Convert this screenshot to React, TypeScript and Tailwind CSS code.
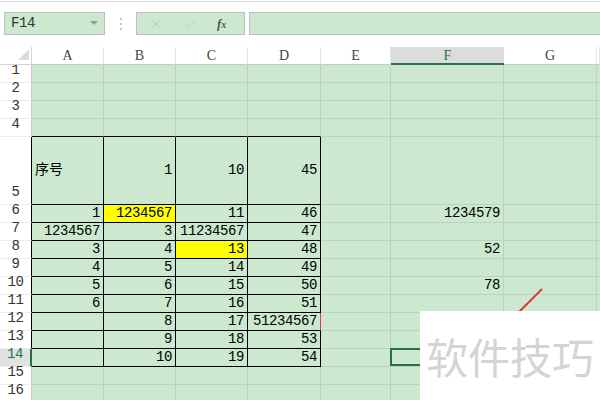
import { X, Check } from "lucide-react";

const COLS = ["", "A", "B", "C", "D", "E", "F", "G", ""];
const WIDTHS = ["w-[32px]", "w-[72px]", "w-[72px]", "w-[72px]", "w-[73px]", "w-[70px]", "w-[113px]", "w-[93px]", "w-[3px]"];

// cell values keyed by "row-col"
const DATA: Record<string, string> = {
  "5-1": "序号", "5-2": "1", "5-3": "10", "5-4": "45",
  "6-1": "1", "6-2": "1234567", "6-3": "11", "6-4": "46", "6-6": "1234579",
  "7-1": "1234567", "7-2": "3", "7-3": "11234567", "7-4": "47",
  "8-1": "3", "8-2": "4", "8-3": "13", "8-4": "48", "8-6": "52",
  "9-1": "4", "9-2": "5", "9-3": "14", "9-4": "49",
  "10-1": "5", "10-2": "6", "10-3": "15", "10-4": "50", "10-6": "78",
  "11-1": "6", "11-2": "7", "11-3": "16", "11-4": "51",
  "12-2": "8", "12-3": "17", "12-4": "51234567",
  "13-2": "9", "13-3": "18", "13-4": "53",
  "14-2": "10", "14-3": "19", "14-4": "54",
};

const YELLOW = ["6-2", "8-3"];

const inTable = (r: number, c: number) => r >= 5 && r <= 14 && c >= 1 && c <= 4;

const mono = { fontFamily: '"Liberation Mono", "Noto Sans CJK SC", monospace' };

const Toolbar = () => (
  <div className="h-[46px] bg-white border-t border-[#d9d9d9] mt-[1px] flex items-start pt-[10px]">
    <div className="ml-[4px] w-[101px] h-[23px] bg-[#cce8cf] border border-[#bdbdbd] flex items-center justify-between pl-[6px] pr-[6px]">
      <span className="text-[14px] tracking-[-0.4px] text-[#333]" style={mono}>F14</span>
      <svg width="8" height="5" viewBox="0 0 8 5">
        <polygon points="0,0 8,0 4,4" fill="#9a9a9a" />
      </svg>
    </div>
    <div className="w-[31px] h-[23px] flex flex-col items-center justify-center gap-[3px]">
      <div className="w-[2px] h-[2px] bg-[#c4c4c4]" />
      <div className="w-[2px] h-[2px] bg-[#c4c4c4]" />
      <div className="w-[2px] h-[2px] bg-[#c4c4c4]" />
    </div>
    <div className="w-[109px] h-[23px] bg-[#cce8cf] border border-[#bdbdbd] flex items-center">
      <X size={14} strokeWidth={1.5} className="ml-[12px] text-[#b8c8ba]" />
      <Check size={14} strokeWidth={1.5} className="ml-[20px] text-[#b8c8ba]" />
      <span
        className="ml-[20px] text-[13px] italic font-bold text-[#555]"
        style={{ fontFamily: '"Liberation Serif", serif' }}
      >
        f<span className="text-[10px]">x</span>
      </span>
    </div>
    <div className="ml-[4px] flex-1 h-[23px] bg-[#cce8cf] border border-[#bdbdbd] border-r-0" />
  </div>
);

const HeaderRow = () => (
  <div className="flex h-[18px]">
    {COLS.map((name, c) => {
      if (c === 0)
        return (
          <div key={c} className={`${WIDTHS[c]} shrink-0 bg-white border-r border-b border-[#d4d4d4] relative`}>
            <svg className="absolute left-[18px] top-[2px]" width="11" height="11" viewBox="0 0 11 11">
              <polygon points="11,0 11,11 0,11" fill="#dcdcdc" />
            </svg>
          </div>
        );
      if (c === 6)
        return (
          <div
            key={c}
            className={`${WIDTHS[c]} shrink-0 bg-[#dcdcdc] border-b-2 border-[#217346] flex items-center justify-center text-[14px] text-[#217346]`}
            style={{ fontFamily: '"Liberation Serif", serif' }}
          >
            {name}
          </div>
        );
      return (
        <div
          key={c}
          className={`${WIDTHS[c]} shrink-0 bg-white border-r border-b border-r-[#e6e6e6] border-b-[#c8c8c8] flex items-center justify-center text-[14px] text-[#444]`}
          style={{ fontFamily: '"Liberation Serif", serif' }}
        >
          {name}
        </div>
      );
    })}
  </div>
);

const RowHeader = ({ r }: { r: number }) => {
  if (r === 14)
    return (
      <div
        className={`${WIDTHS[0]} shrink-0 bg-[#e1e1e1] border-r-2 border-b border-r-[#217346] border-b-[#ececec] flex items-end justify-center pb-[1px] text-[14px] tracking-[-0.4px] text-[#217346]`}
        style={mono}
      >
        {r}
      </div>
    );
  const right = r >= 5 && r <= 13 ? "border-r-black" : "border-r-[#c8c8c8]";
  return (
    <div
      className={`${WIDTHS[0]} shrink-0 bg-white border-r border-b ${right} border-b-[#ececec] flex items-end justify-center pb-[1px] text-[14px] tracking-[-0.4px] text-[#333]`}
      style={mono}
    >
      {r}
    </div>
  );
};

const Cell = ({ r, c }: { r: number; c: number }) => {
  const key = `${r}-${c}`;
  const value = DATA[key];
  const rightBlack = inTable(r, c) || inTable(r, c + 1);
  const bottomBlack = inTable(r, c) || inTable(r + 1, c);
  let right = rightBlack ? "border-r-black" : "border-r-[#bcd2bf]";
  if (key === "12-4") right = "border-r-[#e04040]";
  const bottom = bottomBlack ? "border-b-black" : "border-b-[#bcd2bf]";
  const bg = YELLOW.includes(key) ? "bg-[#ffff00]" : "bg-[#cce8cf]";
  const isText = key === "5-1";
  return (
    <div
      className={`${WIDTHS[c]} shrink-0 relative border-r border-b ${right} ${bottom} ${bg} flex items-center ${
        isText ? "justify-start pl-[3px]" : "justify-end pr-[3px]"
      } ${isText ? "text-[14px]" : "text-[14px] tracking-[-0.4px]"} text-black whitespace-nowrap`}
      style={mono}
    >
      {value}
      {key === "14-6" && (
        <div className="absolute -left-[1px] -top-[1px] right-0 bottom-0 border-2 border-[#217346]" />
      )}
    </div>
  );
};

const Row = ({ r }: { r: number }) => (
  <div className={`flex ${r === 5 ? "h-[68px]" : "h-[18px]"}`}>
    <RowHeader r={r} />
    {COLS.slice(1).map((_, i) => (
      <Cell key={i} r={r} c={i + 1} />
    ))}
  </div>
);

export default function App() {
  return (
    <div className="relative w-[600px] h-[400px] overflow-hidden bg-white">
      <Toolbar />
      <HeaderRow />
      {[...Array(16)].map((_, i) => (
        <Row key={i} r={i + 1} />
      ))}
      <svg className="absolute left-[515px] top-[285px]" width="32" height="32" viewBox="0 0 32 32">
        <line x1="4" y1="27" x2="27" y2="4" stroke="#e0302f" strokeWidth="1.8" />
      </svg>
      <div className="absolute right-0 bottom-0 w-[180px] h-[89px] bg-white flex items-center justify-center">
        <span
          className="text-[42px] text-[#d4d4d4]"
          style={{ fontFamily: '"Noto Sans CJK SC", sans-serif' }}
        >
          软件技巧
        </span>
      </div>
    </div>
  );
}
